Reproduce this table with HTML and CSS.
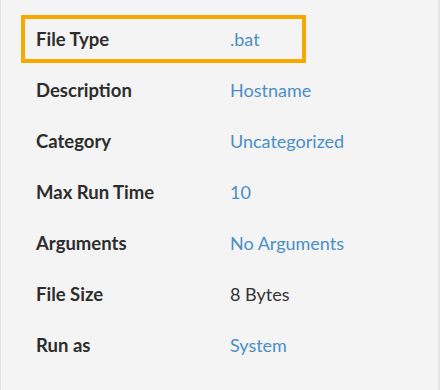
FILE: index.html
```html
<!DOCTYPE html>
<html>
<head>
<meta charset="utf-8">
<link rel="stylesheet" href="styles.css">
</head>
<body>
<div class="panel">
  <dl class="props">
    <div class="row row-active"><dt>File Type</dt><dd class="link">.bat</dd></div>
    <div class="row"><dt>Description</dt><dd class="link">Hostname</dd></div>
    <div class="row"><dt>Category</dt><dd class="link">Uncategorized</dd></div>
    <div class="row"><dt>Max Run Time</dt><dd class="link">10</dd></div>
    <div class="row"><dt>Arguments</dt><dd class="link">No Arguments</dd></div>
    <div class="row"><dt>File Size</dt><dd>8 Bytes</dd></div>
    <div class="row"><dt>Run as</dt><dd class="link">System</dd></div>
  </dl>
</div>
</body>
</html>
```
FILE: styles.css
```css
html, body {
  margin: 0;
  padding: 0;
  background: #f4f4f4;
}
.panel {
  box-sizing: border-box;
  width: 440px;
  height: 390px;
  background: #f4f4f4;
  border-left: 1px solid #e2e2e2;
  border-right: 2px solid #e6e6e6;
  padding: 15px 0 0 20px;
  font-family: Lato, "Open Sans", sans-serif;
  font-size: 18px;
  color: #333333;
}
.props {
  margin: 0;
  display: flex;
  flex-direction: column;
  gap: 3px;
}
.row {
  box-sizing: border-box;
  width: 285px;
  height: 48px;
  border: 4px solid transparent;
  padding: 0 11px;
  display: grid;
  grid-template-columns: 194px max-content;
  align-items: center;
  white-space: nowrap;
}
.row-active {
  border-color: #f7a900;
}
dt {
  font-weight: 700;
  font-size: 18.5px;
  color: #2d2d2d;
}
dd {
  margin: 0;
  color: #333333;
}
dd.link {
  color: #4a8ec6;
}
```
